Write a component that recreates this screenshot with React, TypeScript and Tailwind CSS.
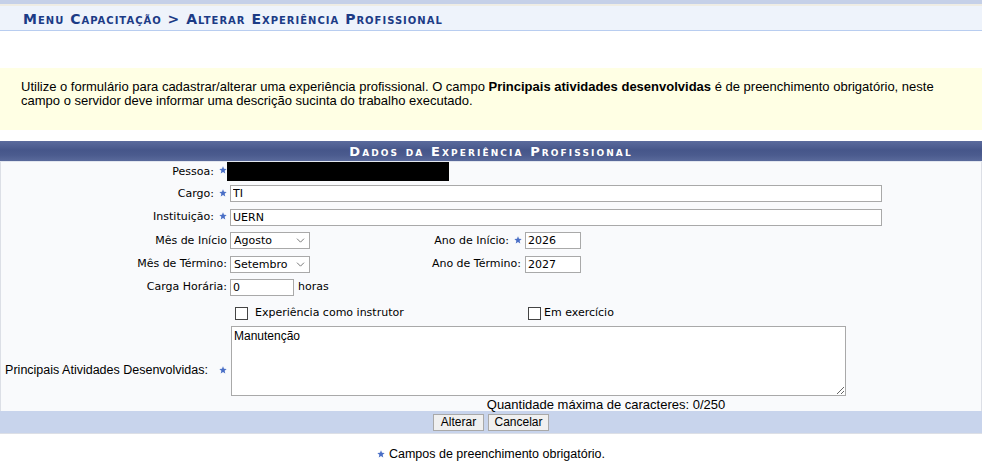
import React from 'react'

// ─── fonts ──────────────────────────────────────────────────────────────────

const verdana = "font-['DejaVu_Sans',Verdana,sans-serif]"
const tahoma = "font-['Liberation_Sans',Tahoma,Arial,sans-serif]"

// ─── helpers ────────────────────────────────────────────────────────────────

function Star({ className = '' }: { className?: string }) {
  return (
    <svg viewBox="0 0 10 10" className={`inline-block w-[8px] h-[8px] align-[0px] ${className}`}>
      <path
        d="M5 0.4 L6.25 3.55 L9.6 3.75 L7.05 5.95 L7.85 9.4 L5 7.55 L2.15 9.4 L2.95 5.95 L0.4 3.75 L3.75 3.55 Z"
        fill="#4a6fc6"
      />
    </svg>
  )
}

function Label({ children, required }: { children: React.ReactNode; required?: boolean }) {
  return (
    <div className="w-[226px] shrink-0 text-right whitespace-nowrap">
      {children}
      {required && <Star className="ml-[5px]" />}
    </div>
  )
}

function Select({ value, options }: { value: string; options: string[] }) {
  return (
    <div className="relative w-[80px] h-[17px]">
      <select
        defaultValue={value}
        className={`${verdana} appearance-none w-full h-full border border-[#a9a9a9] bg-white text-[11px] leading-[15px] pl-[3px] pr-[14px] text-black outline-none`}
      >
        {options.map((o) => (
          <option key={o}>{o}</option>
        ))}
      </select>
      <svg
        viewBox="0 0 10 6"
        className="absolute right-[5px] top-[6px] w-[9px] h-[5px] pointer-events-none"
      >
        <path d="M0.8 0.8 L5 5 L9.2 0.8" fill="none" stroke="#6d6d6d" strokeWidth="1.1" />
      </svg>
    </div>
  )
}

function TextInput({ value, width }: { value: string; width: string }) {
  return (
    <input
      defaultValue={value}
      className={`${verdana} ${width} h-[17px] border border-[#a9a9a9] bg-white text-[11px] px-[2px] text-black outline-none`}
    />
  )
}

function Checkbox() {
  return (
    <input
      type="checkbox"
      className="appearance-none w-[13px] h-[13px] border border-[#444] bg-white shrink-0 m-0"
    />
  )
}

const meses = [
  'Janeiro',
  'Fevereiro',
  'Março',
  'Abril',
  'Maio',
  'Junho',
  'Julho',
  'Agosto',
  'Setembro',
  'Outubro',
  'Novembro',
  'Dezembro',
]

// ─── main component ──────────────────────────────────────────────────────────

export default function App() {
  return (
    <div className={`${verdana} w-[982px] h-[464px] overflow-hidden bg-white text-[11px] text-black`}>
      {/* ── top bar / breadcrumb ─────────────────────────────────── */}
      <div className="h-[4px] bg-[#c5d0e8]" />
      <div className="h-[2px] bg-[#eeece4]" />
      <div className="h-[25px] bg-[#eef3fb] border-b border-[#b8cdf0] flex items-center pl-[23px] pt-[2px]">
        <h2 className="text-[14px] font-bold tracking-[1px] text-[#1c3b86] [font-variant:small-caps] leading-none">
          Menu Capacitação &gt; Alterar Experiência Profissional
        </h2>
      </div>

      <div className="h-[37px]" />

      {/* ── instructions ─────────────────────────────────────────── */}
      <div className={`${tahoma} h-[62px] bg-[#ffffe4] pl-[21px] pr-[20px] pt-[12px] text-[13px] leading-[14px]`}>
        <p className="whitespace-nowrap">
          Utilize o formulário para cadastrar/alterar uma experiência profissional. O campo{' '}
          <b>Principais atividades desenvolvidas</b> é de preenchimento obrigatório, neste
        </p>
        <p className="whitespace-nowrap">
          campo o servidor deve informar uma descrição sucinta do trabalho executado.
        </p>
      </div>

      <div className="h-[11px]" />

      {/* ── form ─────────────────────────────────────────────────── */}
      <div className="h-[21px] bg-[linear-gradient(#5b6b9d,#46568a_45%,#4b5b8e_70%,#5a6a9b)] flex items-center justify-center border-b border-[#e2e6ef]">
        <span className="text-white font-bold text-[13px] tracking-[2.1px] [font-variant:small-caps] leading-none">
          Dados da Experiência Profissional
        </span>
      </div>

      <div className="h-[249px] bg-[#f9fafc] border-x border-[#dcdfe6] flex flex-col">
        {/* Pessoa */}
        <div className="flex items-center h-[19px]">
          <Label required>
            <span className="relative top-[1px]">Pessoa:</span>
          </Label>
          <div className="w-[222px] h-[19px] bg-black" />
        </div>

        {/* Cargo */}
        <div className="flex items-center mt-[4px]">
          <Label required>Cargo:</Label>
          <div className="ml-[3px]">
            <TextInput value="TI" width="w-[652px]" />
          </div>
        </div>

        {/* Instituição */}
        <div className="flex items-center mt-[6px]">
          <Label required>Instituição:</Label>
          <div className="ml-[3px]">
            <TextInput value="UERN" width="w-[652px]" />
          </div>
        </div>

        {/* Mês / Ano de início */}
        <div className="flex items-center mt-[6px]">
          <Label>Mês de Início</Label>
          <div className="ml-[3px]">
            <Select value="Agosto" options={meses} />
          </div>
          <div className="w-[212px] text-right whitespace-nowrap">
            Ano de Início:
            <Star className="ml-[5px]" />
          </div>
          <div className="ml-[3px]">
            <TextInput value="2026" width="w-[56px]" />
          </div>
        </div>

        {/* Mês / Ano de término */}
        <div className="flex items-center mt-[6px]">
          <Label>Mês de Término:</Label>
          <div className="ml-[3px]">
            <Select value="Setembro" options={meses} />
          </div>
          <div className="w-[212px] text-right whitespace-nowrap pr-[1px]">Ano de Término:</div>
          <div className="ml-[3px]">
            <TextInput value="2027" width="w-[56px]" />
          </div>
        </div>

        {/* Carga horária */}
        <div className="flex items-center mt-[6px]">
          <Label>Carga Horária:</Label>
          <div className="ml-[3px] flex items-center gap-[4px]">
            <TextInput value="0" width="w-[64px]" />
            <span>horas</span>
          </div>
        </div>

        {/* Checkboxes */}
        <div className="flex items-center mt-[11px] h-[13px]">
          <div className="w-[226px] shrink-0" />
          <label className="ml-[8px] w-[293px] flex items-center gap-[7px]">
            <Checkbox />
            <span>Experiência como instrutor</span>
          </label>
          <label className="flex items-center gap-[3px]">
            <Checkbox />
            <span>Em exercício</span>
          </label>
        </div>

        {/* Principais atividades */}
        <div className="flex items-start mt-[6px]">
          <div className={`${tahoma} w-[226px] shrink-0 text-right whitespace-nowrap text-[12.5px] mt-[35px]`}>
            Principais Atividades Desenvolvidas:
            <Star className="ml-[11px]" />
          </div>
          <textarea
            defaultValue="Manutenção"
            className={`${tahoma} ml-[4px] w-[615px] h-[70px] border border-[#a9a9a9] bg-white text-[12px] leading-[14px] px-[2px] py-[2px] text-black outline-none`}
          />
        </div>

        <div className="flex mt-[2px]">
          <div className="w-[230px] shrink-0" />
          <div className={`${tahoma} flex-1 text-center text-[13px] leading-[14px]`}>
            Quantidade máxima de caracteres: 0/250
          </div>
        </div>
      </div>

      {/* ── actions ──────────────────────────────────────────────── */}
      <div className="h-[23px] bg-[#c8d4ec] border-b border-[#dcdfe6] flex items-center justify-center gap-[4px]">
        <button
          className={`${tahoma} h-[17px] w-[51px] border border-[#a9a9a9] bg-[#f0f0f0] text-[12px] leading-none text-black`}
        >
          Alterar
        </button>
        <button
          className={`${tahoma} h-[17px] w-[61px] border border-[#a9a9a9] bg-[#f0f0f0] text-[12px] leading-none text-black`}
        >
          Cancelar
        </button>
      </div>

      {/* ── legend ───────────────────────────────────────────────── */}
      <div className={`${tahoma} mt-[13px] text-center text-[12.5px] leading-[14px]`}>
        <Star className="mr-[4px]" />
        Campos de preenchimento obrigatório.
      </div>
    </div>
  )
}
